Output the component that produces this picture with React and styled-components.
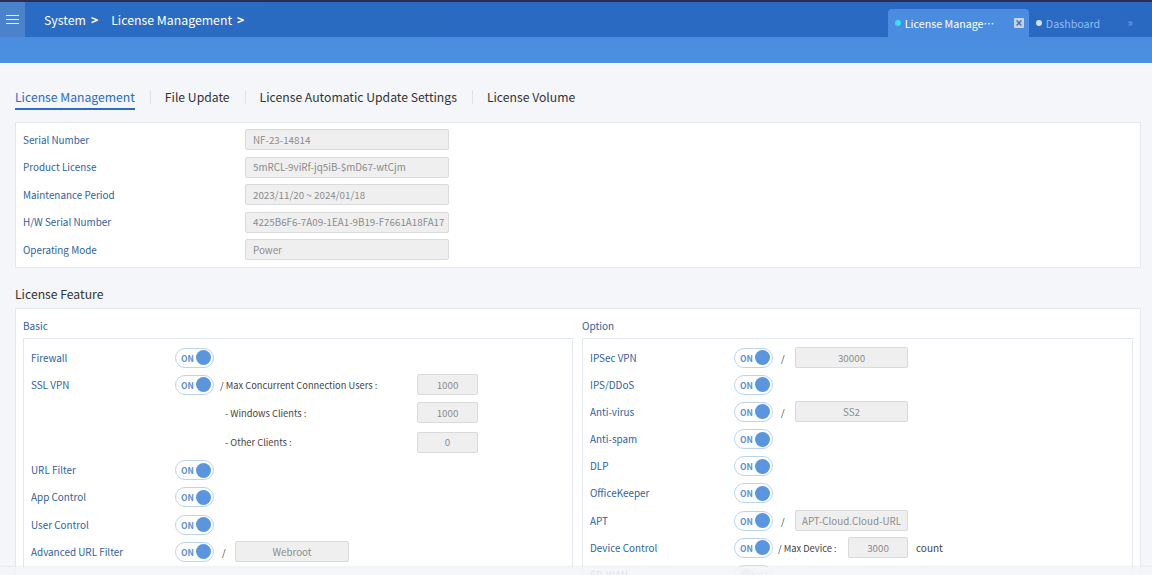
import React from "react";
import styled, { createGlobalStyle } from "styled-components";

const GlobalStyle = createGlobalStyle`
  html, body {
    margin: 0;
    padding: 0;
    overflow: hidden;
    background: #f4f6fa;
    font-family: "Noto Sans CJK KR", "Noto Sans", sans-serif;
  }
  * { box-sizing: border-box; }
`;

const Page = styled.div`
  width: 1152px;
  min-height: 575px;
  background: #f4f6fa;
`;

const TopLine = styled.div`
  height: 2px;
  background: #2b2d55;
`;

const NavBar = styled.div`
  height: 35px;
  background: linear-gradient(90deg, #2a6cc3, #2a69c2);
  display: flex;
  align-items: stretch;
`;

const Burger = styled.button`
  width: 25px;
  border: none;
  padding: 0;
  background: #4a82cb;
  display: flex;
  flex-direction: column;
  align-items: center;
  justify-content: center;
  gap: 2.5px;
  span {
    display: block;
    width: 13px;
    height: 1.5px;
    background: #e6eef9;
  }
`;

const Crumbs = styled.div`
  display: flex;
  align-items: center;
  padding-left: 19px;
  color: #fff;
  font-size: 12.3px;
  flex: 1;
  gap: 13px;
  span b {
    margin-left: 5px;
    font-weight: 700;
  }
`;

const WinTabs = styled.div`
  display: flex;
  align-items: flex-end;
  padding-right: 19px;
`;

const WinTab = styled.div`
  height: 28px;
  display: flex;
  align-items: center;
  padding: 0 5px 0 7px;
  border-radius: 4px 4px 0 0;
  background: ${(p) => (p.$active ? "#4a8de0" : "transparent")};
  color: ${(p) => (p.$active ? "#fff" : "#8fbdf2")};
  font-size: 10.7px;
  gap: 3px;
`;

const Dot = styled.i`
  width: 6px;
  height: 6px;
  border-radius: 50%;
  background: ${(p) => p.$c};
  margin-right: 1px;
`;

const TabText = styled.span`
  max-width: ${(p) => p.$max || 200}px;
  white-space: nowrap;
  overflow: hidden;
  text-overflow: ellipsis;
`;

const More = styled.span`
  color: #6ca3e6;
  font-size: 12px;
  margin-left: 22px;
  padding-bottom: 7px;
`;

const Band = styled.div`
  height: 26px;
  background: linear-gradient(180deg, #4a8ddf, #4b8fe0);
`;

const Content = styled.main`
  padding: 25px 11px 0 15px;
`;

const Tabs = styled.nav`
  display: flex;
  align-items: center;
  margin-bottom: 12px;
`;

const Tab = styled.div`
  font-size: 12.2px;
  line-height: 18px;
  color: ${(p) => (p.$active ? "#2b6cc6" : "#333")};
  padding-bottom: 2px;
  border-bottom: 2px solid ${(p) => (p.$active ? "#2b6cc6" : "transparent")};
`;

const Sep = styled.div`
  width: 1px;
  height: 14px;
  background: #dde2e9;
  margin: 0 14px 4px 15px;
`;

const Card = styled.section`
  background: #fff;
  border: 1px solid #e3e7ee;
  padding: ${(p) => p.$pad || "6px 7px 7px"};
`;

const FormRows = styled.div`
  display: flex;
  flex-direction: column;
  gap: 6.5px;
`;

const FormRow = styled.div`
  display: flex;
  align-items: center;
  height: 21px;
`;

const Label = styled.label`
  width: ${(p) => p.$w || 222}px;
  flex-shrink: 0;
  font-size: 9.9px;
  color: #305f9d;
`;

const Field = styled.div`
  width: ${(p) => p.$w}px;
  height: 21px;
  background: #efefef;
  border: 1px solid #dadada;
  border-radius: 2px;
  font-size: 9.8px;
  color: #8c8c8c;
  display: flex;
  align-items: center;
  justify-content: ${(p) => (p.$center ? "center" : "flex-start")};
  padding: 0 ${(p) => (p.$center ? 2 : 7)}px;
  white-space: nowrap;
  overflow: hidden;
`;

const SectionTitle = styled.h2`
  margin: 17px 0 5px;
  font-size: 12.2px;
  line-height: 18px;
  font-weight: 400;
  color: #333;
`;

const Columns = styled.div`
  display: grid;
  grid-template-columns: 550px 551px;
  gap: 9px;
`;

const GroupTitle = styled.h3`
  margin: 2px 0 4px;
  font-size: 10px;
  line-height: 16px;
  font-weight: 400;
  color: #305f9d;
`;

const Box = styled.div`
  border: 1px solid #e3e7ee;
  padding: 8px 7px 5px;
  display: flex;
  flex-direction: column;
  gap: 6.2px;
`;

const Row = styled.div`
  display: flex;
  align-items: center;
  height: ${(p) => p.$h || 21}px;
  font-size: 10px;
  color: #444;
`;

const ToggleWrap = styled.div`
  width: 39px;
  height: 20px;
  flex-shrink: 0;
  border: 1px solid ${(p) => (p.$on ? "#bcd3ef" : "#dcdcdc")};
  border-radius: 10px;
  background: #fff;
  display: flex;
  align-items: center;
  flex-direction: ${(p) => (p.$on ? "row" : "row-reverse")};
  justify-content: space-between;
  padding: 0 2px 0 5px;
  font-size: 8.5px;
  font-weight: 700;
  color: ${(p) => (p.$on ? "#5b92d6" : "#bbb")};
  &::after {
    content: "";
    width: 15px;
    height: 15px;
    border-radius: 50%;
    background: ${(p) => (p.$on ? "#5a95e0" : "#cfcfcf")};
  }
`;

const Toggle = ({ on = true }) => (
  <ToggleWrap $on={on}>{on ? "ON" : "OFF"}</ToggleWrap>
);

const Spacer = styled.div`
  width: ${(p) => p.$w}px;
  flex-shrink: 0;
`;

const Note = styled.span`
  width: ${(p) => p.$w || "auto"};
  flex-shrink: 0;
  padding-left: ${(p) => p.$pl || 6}px;
  font-size: 9.3px;
  color: #444;
  white-space: nowrap;
`;

const Unit = styled.span`
  margin-left: 8px;
  font-size: 10px;
  color: #444;
`;

const Fade = styled.div`
  position: fixed;
  left: 0;
  right: 0;
  bottom: 0;
  height: 8px;
  background: rgba(244, 245, 248, 0.88);
  box-shadow: 0 -1px 2px rgba(0, 0, 0, 0.06);
`;

const CloseIcon = () => (
  <svg width="10" height="10" viewBox="0 0 10 10" style={{ marginLeft: 7 }}>
    <rect x="0" y="0" width="10" height="10" rx="1" fill="#c3d3e8" />
    <path d="M2.6 2.6 L7.4 7.4 M7.4 2.6 L2.6 7.4" stroke="#4a6f9e" strokeWidth="1.4" />
  </svg>
);

const info = [
  ["Serial Number", "NF-23-14814"],
  ["Product License", "5mRCL-9viRf-jq5iB-$mD67-wtCjm"],
  ["Maintenance Period", "2023/11/20 ~ 2024/01/18"],
  ["H/W Serial Number", "4225B6F6-7A09-1EA1-9B19-F7661A18FA17"],
  ["Operating Mode", "Power"],
];

export default function App() {
  return (
    <Page>
      <GlobalStyle />
      <TopLine />
      <NavBar>
        <Burger aria-label="menu">
          <span />
          <span />
          <span />
        </Burger>
        <Crumbs>
          <span>
            System<b>&gt;</b>
          </span>
          <span>
            License Management<b>&gt;</b>
          </span>
        </Crumbs>
        <WinTabs>
          <WinTab $active>
            <Dot $c="#33e2ee" />
            <TabText $max={99}>License Management</TabText>
            <CloseIcon />
          </WinTab>
          <WinTab>
            <Dot $c="#d2e0f3" />
            <TabText>Dashboard</TabText>
          </WinTab>
          <More>»</More>
        </WinTabs>
      </NavBar>
      <Band />

      <Content>
        <Tabs>
          <Tab $active>License Management</Tab>
          <Sep />
          <Tab>File Update</Tab>
          <Sep />
          <Tab>License Automatic Update Settings</Tab>
          <Sep />
          <Tab>License Volume</Tab>
        </Tabs>

        <Card>
          <FormRows>
            {info.map(([k, v]) => (
              <FormRow key={k}>
                <Label>{k}</Label>
                <Field $w={204}>{v}</Field>
              </FormRow>
            ))}
          </FormRows>
        </Card>

        <SectionTitle>License Feature</SectionTitle>
        <Card $pad="7px 7px 0">
          <Columns>
            <div>
              <GroupTitle>Basic</GroupTitle>
              <Box>
                <Row>
                  <Label $w={144}>Firewall</Label>
                  <Toggle />
                </Row>
                <Row>
                  <Label $w={144}>SSL VPN</Label>
                  <Toggle />
                  <Note $w="203px">/ Max Concurrent Connection Users :</Note>
                  <Field $w={61} $center>1000</Field>
                </Row>
                <Row $h={23}>
                  <Spacer $w={183} />
                  <Note $w="203px" $pl={11}>- Windows Clients :</Note>
                  <Field $w={61} $center>1000</Field>
                </Row>
                <Row $h={23}>
                  <Spacer $w={183} />
                  <Note $w="203px" $pl={11}>- Other Clients :</Note>
                  <Field $w={61} $center>0</Field>
                </Row>
                <Row>
                  <Label $w={144}>URL Filter</Label>
                  <Toggle />
                </Row>
                <Row>
                  <Label $w={144}>App Control</Label>
                  <Toggle />
                </Row>
                <Row>
                  <Label $w={144}>User Control</Label>
                  <Toggle />
                </Row>
                <Row>
                  <Label $w={144}>Advanced URL Filter</Label>
                  <Toggle />
                  <Note $w="21px" $pl={8}>/</Note>
                  <Field $w={114} $center>Webroot</Field>
                </Row>
              </Box>
            </div>
            <div>
              <GroupTitle>Option</GroupTitle>
              <Box>
                <Row>
                  <Label $w={144}>IPSec VPN</Label>
                  <Toggle />
                  <Note $w="22px" $pl={8}>/</Note>
                  <Field $w={113} $center>30000</Field>
                </Row>
                <Row>
                  <Label $w={144}>IPS/DDoS</Label>
                  <Toggle />
                </Row>
                <Row>
                  <Label $w={144}>Anti-virus</Label>
                  <Toggle />
                  <Note $w="22px" $pl={8}>/</Note>
                  <Field $w={113} $center>SS2</Field>
                </Row>
                <Row>
                  <Label $w={144}>Anti-spam</Label>
                  <Toggle />
                </Row>
                <Row>
                  <Label $w={144}>DLP</Label>
                  <Toggle />
                </Row>
                <Row>
                  <Label $w={144}>OfficeKeeper</Label>
                  <Toggle />
                </Row>
                <Row>
                  <Label $w={144}>APT</Label>
                  <Toggle />
                  <Note $w="22px" $pl={8}>/</Note>
                  <Field $w={113} $center>APT-Cloud.Cloud-URL</Field>
                </Row>
                <Row>
                  <Label $w={144}>Device Control</Label>
                  <Toggle />
                  <Note $w="75px" $pl={5}>/ Max Device :</Note>
                  <Field $w={60} $center>3000</Field>
                  <Unit>count</Unit>
                </Row>
                <Row>
                  <Label $w={144}>SD-WAN</Label>
                  <Toggle on={false} />
                </Row>
              </Box>
            </div>
          </Columns>
        </Card>
      </Content>
      <Fade />
    </Page>
  );
}
